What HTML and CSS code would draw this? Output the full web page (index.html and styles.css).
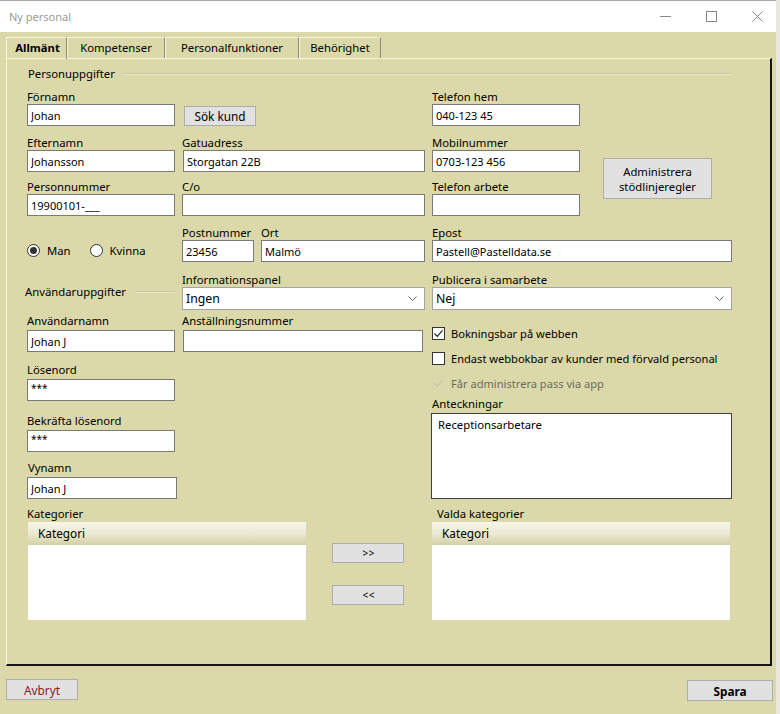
FILE: index.html
```html
<!DOCTYPE html>
<html lang="sv">
<head>
<meta charset="utf-8">
<title>Ny personal</title>
<link rel="stylesheet" href="styles.css">
</head>
<body>
<div class="window">
  <header class="titlebar">
    <span class="title">Ny personal</span>
    <div class="controls">
      <span class="ctl"><svg width="11" height="11" viewBox="0 0 11 11"><path d="M0 5.5H11" stroke="#888" stroke-width="1"/></svg></span>
      <span class="ctl"><svg width="11" height="11" viewBox="0 0 11 11"><rect x="0.5" y="0.5" width="10" height="10" fill="none" stroke="#888"/></svg></span>
      <span class="ctl"><svg width="11" height="11" viewBox="0 0 11 11"><path d="M0.5 0.5L10.5 10.5M10.5 0.5L0.5 10.5" stroke="#888"/></svg></span>
    </div>
  </header>

  <nav class="tabs">
    <div class="tab active t-allmant">Allmänt</div>
    <div class="tab t-komp">Kompetenser</div>
    <div class="tab t-pers">Personalfunktioner</div>
    <div class="tab t-beh">Behörighet</div>
  </nav>

  <section class="panel">
    <div class="group-head head-main"><span>Personuppgifter</span><span class="rule"></span></div>

    <div class="form">
      <div class="col col-a">
        <div class="field"><span class="lbl">Förnamn</span><input class="inp" value="Johan"></div>
        <div class="field f-efternamn"><span class="lbl">Efternamn</span><input class="inp" value="Johansson"></div>
        <div class="field f-pnr"><span class="lbl">Personnummer</span><input class="inp" value="19900101-___"></div>
        <div class="radios">
          <span class="radio-item"><span class="radio checked"></span>Man</span>
          <span class="radio-item"><span class="radio"></span>Kvinna</span>
        </div>
        <div class="group-head head-user"><span>Användaruppgifter</span><span class="rule"></span></div>
        <div class="field f-anvnamn"><span class="lbl gap">Användarnamn</span><input class="inp" value="Johan J"></div>
        <div class="field f-losen"><span class="lbl gap">Lösenord</span><input class="inp pw" value="***"></div>
        <div class="field f-bekrafta"><span class="lbl gap">Bekräfta lösenord</span><input class="inp pw" value="***"></div>
        <div class="field f-vynamn"><span class="lbl gap ind">Vynamn</span><input class="inp wide" value="Johan J"></div>
      </div>

      <div class="col col-b">
        <button class="btn btn-sok">Sök kund</button>
        <div class="field f-gatu"><span class="lbl">Gatuadress</span><input class="inp b-full shift" value="Storgatan 22B"></div>
        <div class="field f-co"><span class="lbl">C/o</span><input class="inp b-full" value=""></div>
        <div class="post-row">
          <div class="field"><span class="lbl">Postnummer</span><input class="inp postnr" value="23456"></div>
          <div class="field"><span class="lbl">Ort</span><input class="inp ort" value="Malmö"></div>
        </div>
        <div class="field f-info"><span class="lbl">Informationspanel</span>
          <div class="select"><span>Ingen</span><svg width="9" height="5" viewBox="0 0 9 5"><path d="M0.5 0.5L4.5 4.5L8.5 0.5" fill="none" stroke="#666"/></svg></div>
        </div>
        <div class="field f-anst"><span class="lbl gap">Anställningsnummer</span><input class="inp anst" value=""></div>
      </div>

      <div class="col col-c">
        <div class="phone-block">
          <div class="phones">
            <div class="field"><span class="lbl">Telefon hem</span><input class="inp" value="040-123 45"></div>
            <div class="field f-efternamn"><span class="lbl">Mobilnummer</span><input class="inp" value="0703-123 456"></div>
            <div class="field f-pnr"><span class="lbl">Telefon arbete</span><input class="inp" value=""></div>
          </div>
          <button class="btn btn-admin">Administrera<br>stödlinjeregler</button>
        </div>
        <div class="field f-epost"><span class="lbl">Epost</span><input class="inp c-full" value="Pastell@Pastelldata.se"></div>
        <div class="field f-info"><span class="lbl">Publicera i samarbete</span>
          <div class="select"><span>Nej</span><svg width="9" height="5" viewBox="0 0 9 5"><path d="M0.5 0.5L4.5 4.5L8.5 0.5" fill="none" stroke="#666"/></svg></div>
        </div>
        <div class="check-item first"><span class="check on"><svg width="11" height="11" viewBox="0 0 11 11"><path d="M1.5 5.5L4.3 8.3L9.5 2.3" fill="none" stroke="#222" stroke-width="1.2"/></svg></span>Bokningsbar på webben</div>
        <div class="check-item"><span class="check"></span>Endast webbokbar av kunder med förvald personal</div>
        <div class="check-item disabled"><span class="check"><svg width="11" height="11" viewBox="0 0 11 11"><path d="M1.5 5.5L4.3 8.3L9.5 2.3" fill="none" stroke="#c4c3a8" stroke-width="1.2"/></svg></span>Får administrera pass via app</div>
        <div class="field f-notes"><span class="lbl gap">Anteckningar</span><div class="textarea">Receptionsarbetare</div></div>
      </div>
    </div>

    <div class="lists">
      <div class="list-block left">
        <span class="lbl">Kategorier</span>
        <div class="listbox"><div class="list-head">Kategori</div></div>
      </div>
      <div class="move-buttons">
        <button class="btn btn-move">&gt; &gt;</button>
        <button class="btn btn-move second">&lt; &lt;</button>
      </div>
      <div class="list-block right">
        <span class="lbl">Valda kategorier</span>
        <div class="listbox"><div class="list-head">Kategori</div></div>
      </div>
    </div>
  </section>

  <footer class="actions">
    <button class="btn cancel">Avbryt</button>
    <button class="btn save">Spara</button>
  </footer>
</div>
</body>
</html>
```

FILE: styles.css
```css
* { box-sizing: border-box; }
html, body { margin: 0; padding: 0; }
body {
  width: 780px;
  height: 714px;
  overflow: hidden;
  background: #e9e8dc;
  font-family: "Noto Sans", "Liberation Sans", sans-serif;
  font-size: 11.3px;
  color: #000;
}
.window {
  width: 776px;
  height: 714px;
  background: #dbd9aa;
  border-top: 1px solid #a9a9a9;
  display: flex;
  flex-direction: column;
}

/* title bar */
.titlebar {
  height: 31px;
  flex: none;
  background: #fff;
  display: flex;
  align-items: center;
  justify-content: space-between;
  padding-left: 9px;
}
.title { color: #9a9a9a; font-size: 11px; }
.controls { display: flex; height: 100%; margin-right: -4px; }
.ctl { width: 46px; display: flex; align-items: center; justify-content: center; }

/* tabs */
.tabs {
  display: flex;
  margin: 5px 0 0 6px;
  height: 21px;
  flex: none;
}
.tab {
  height: 21px;
  line-height: 20px;
  text-align: center;
  border-top: 1px solid #f4f3de;
  border-left: 1px solid #f4f3de;
  border-right: 1px solid #8b8a72;
  white-space: nowrap;
}
.tab.active { font-weight: bold; height: 22px; position: relative; z-index: 1; padding-left: 2px; }
.t-allmant { width: 61px; }
.t-komp { width: 98px; }
.t-pers { width: 134px; }
.t-beh { width: 82px; }

/* panel */
.panel {
  margin-left: 6px;
  width: 766px;
  height: 608px;
  flex: none;
  border-top: 1px solid #f4f3de;
  border-left: 1px solid #f4f3de;
  border-right: 2px solid #151515;
  border-bottom: 2px solid #151515;
  padding: 8px 0 0 20px;
}
.group-head {
  display: flex;
  align-items: center;
  height: 14px;
  line-height: 14px;
  white-space: nowrap;
}
.group-head .rule {
  flex: 1;
  height: 2px;
  border-top: 1px solid #cac89b;
  border-bottom: 1px solid #e9e8c8;
  margin-left: 7px;
}
.head-main { width: 705px; padding-left: 1px; }
.head-user { margin: 28px 2px 0 -2px; align-self: stretch; }
.head-user .rule { margin-left: 10px; }

.form { display: flex; align-items: flex-start; margin-top: 9px; }
.col { display: flex; flex-direction: column; align-items: flex-start; }
.col-a { width: 150px; }
.col-b { width: 244px; margin-left: 5px; }
.col-c { width: 300px; margin-left: 6px; }

.field { display: flex; flex-direction: column; align-items: flex-start; }
.lbl { display: block; height: 14px; line-height: 14px; white-space: nowrap; }
.lbl.gap { margin-bottom: 2px; }
.lbl.ind { padding-left: 1px; }
.inp {
  display: block;
  width: 148px;
  height: 22px;
  margin: 0;
  padding: 0 0 0 3px;
  border: 1px solid #7a7a7a;
  background: #fff;
  font: inherit;
  font-size: 11px;
  color: #000;
  outline: none;
}
.inp.pw { font-size: 10px; padding-top: 0; padding-bottom: 5px; }
.inp.wide { width: 150px; }

.f-efternamn { margin-top: 10px; }
.f-pnr { margin-top: 8px; }
.f-anvnamn { margin-top: 15px; }
.f-losen { margin-top: 11px; }
.f-bekrafta { margin-top: 13px; }
.f-vynamn { margin-top: 9px; }

/* radios */
.radios { display: flex; margin-top: 27px; height: 14px; align-items: center; }
.radio-item { display: flex; align-items: center; margin-right: 19px; }
.radio {
  width: 13px; height: 13px;
  border: 1px solid #333;
  border-radius: 50%;
  background: #fff;
  margin-right: 7px;
  display: flex; align-items: center; justify-content: center;
}
.radio.checked::after {
  content: "";
  width: 7px; height: 7px;
  border-radius: 50%;
  background: #333;
}

/* col b */
.btn {
  font: inherit;
  background: #e1e1e1;
  border: 1px solid #adadad;
  color: #000;
  padding: 0;
  margin: 0;
  line-height: 16px;
}
.btn-sok { width: 72px; height: 20px; margin: 16px 0 0 2px; font-size: 11.8px; }
.f-gatu { margin-top: 10px; }
.f-co { margin-top: 8px; }
.b-full { width: 243px; }
.shift { margin-left: 1px; width: 242px; }
.post-row { display: flex; margin-top: 10px; gap: 7px; }
.postnr { width: 72px; }
.ort { width: 164px; }
.f-info { margin-top: 11px; }
.select {
  width: 243px;
  height: 23px;
  background: #fff;
  border: 1px solid #a4a4a4;
  display: flex;
  align-items: center;
  justify-content: space-between;
  padding: 0 7px 0 3px;
  font-size: 12.3px;
}
.col-c .select { width: 300px; }
.f-anst { margin-top: 4px; }
.anst { width: 240px; margin-left: 1px; }

/* col c */
.phone-block { display: flex; align-items: flex-start; }
.phones { display: flex; flex-direction: column; }
.btn-admin {
  width: 109px;
  height: 41px;
  margin: 68px 0 0 23px;
  line-height: 15px;
  font-size: 11.3px;
}
.f-epost { margin-top: 10px; }
.c-full { width: 300px; }
.check-item {
  display: flex;
  align-items: center;
  height: 14px;
  margin-top: 11px;
  white-space: nowrap;
  font-size: 11.1px;
}
.check-item.first { margin-top: 16px; }
.check {
  width: 13px; height: 13px;
  border: 1px solid #333;
  background: #fff;
  margin-right: 6px;
  display: flex; align-items: center; justify-content: center;
  flex: none;
}
.check-item.disabled { color: #6d6c5a; }
.check-item.disabled .check { border-color: #d6d4b3; background: transparent; }
.f-notes { margin-top: 7px; }
.textarea {
  width: 301px;
  height: 86px;
  margin-left: -1px;
  background: #fff;
  border: 1px solid #404040;
  padding: 3px 6px;
  line-height: 16px;
  font-size: 11.3px;
}

/* lists */
.lists { display: flex; align-items: flex-start; margin-top: 8px; }
.list-block { display: flex; flex-direction: column; }
.list-block.left { width: 279px; }
.list-block.left .listbox { margin-left: 1px; width: 278px; }
.list-block.right { margin-left: 28px; width: 298px; }
.list-block.right .lbl { padding-left: 5px; }
.listbox {
  margin-top: 1px;
  height: 98px;
  background: #fff;
}
.list-head {
  height: 23px;
  line-height: 23px;
  padding-left: 10px;
  font-size: 11.8px;
  background: linear-gradient(#f7f6ea, #ebe9d2 50%, #d3d0a8);
}
.move-buttons { display: flex; flex-direction: column; margin: 36px 0 0 26px; }
.btn-move { width: 72px; height: 20px; font-size: 10px; letter-spacing: -1px; }
.btn-move.second { margin-top: 22px; }

/* footer */
.actions {
  display: flex;
  justify-content: space-between;
  align-items: flex-start;
  margin-top: 13px;
  padding: 0 3px 0 6px;
}
.cancel { width: 72px; height: 21px; color: #8a1c28; font-size: 11.8px; }
.save { width: 86px; height: 21px; font-weight: bold; font-size: 11.8px; margin-top: 1px; }
```
